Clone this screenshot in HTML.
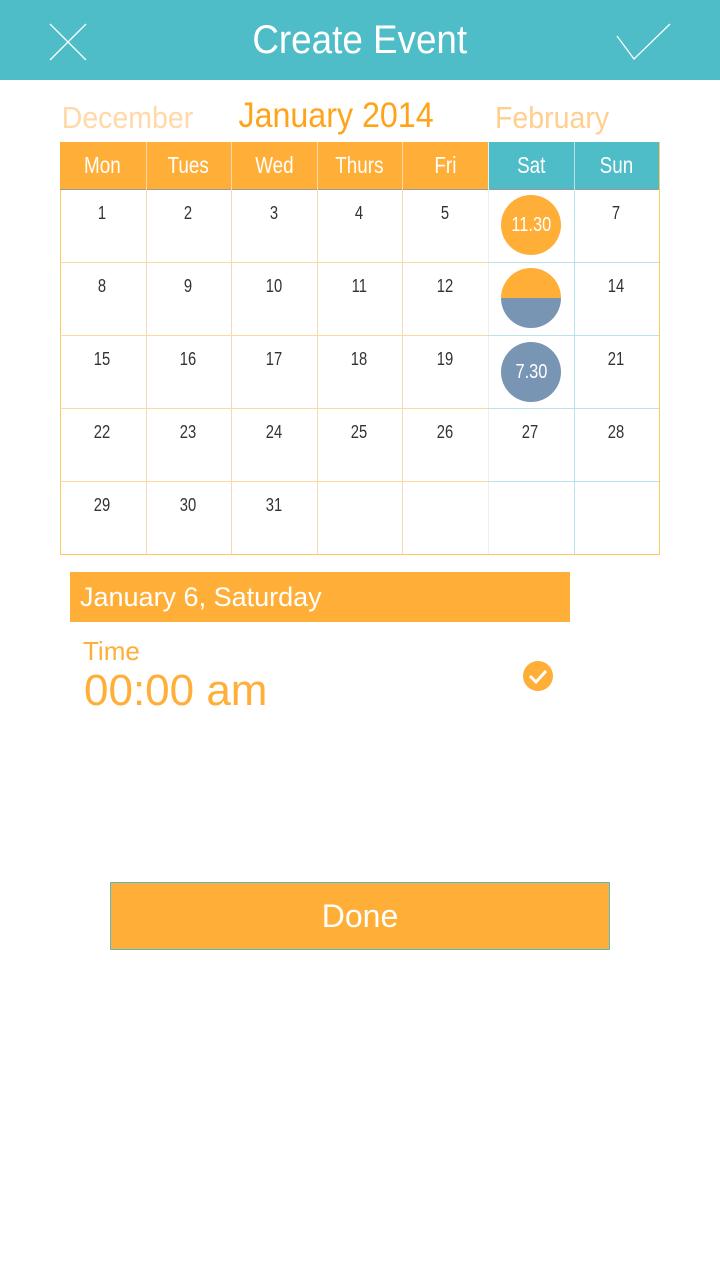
<!DOCTYPE html>
<html><head><meta charset="utf-8"><style>
*{margin:0;padding:0;box-sizing:border-box}
body{width:720px;height:1280px;background:#fff;position:relative;overflow:hidden;font-family:"Liberation Sans",sans-serif}
.a{position:absolute}
.top{left:0;top:0;width:720px;height:80px;background:#4ebdc8}
.sq{display:inline-block;transform:scaleX(0.82);transform-origin:center}
.sq2{display:inline-block;transform:scaleX(0.92);transform-origin:center}
.title{left:0;width:720px;top:18px;text-align:center;color:#fff;font-size:40px}
.m{top:96px;font-size:35px;color:#ffa31a;width:260px;text-align:center}
.hd{top:142px;height:47px;color:#fff;font-size:23px;text-align:center;line-height:46px}
.n{font-size:18px;color:#333;text-align:center;width:85px}
.c{width:60px;height:60px;border-radius:50%;color:#fff;font-size:20px;text-align:center;line-height:60px}
</style></head><body>
<div class="a top"></div>
<svg class="a" style="left:48px;top:22px" width="40" height="40"><path d="M2 2L38 38M38 2L2 38" stroke="#fff" stroke-width="1.3"/></svg>
<svg class="a" style="left:615px;top:22px" width="58" height="40"><path d="M2 14L19 37L55 2" stroke="#fff" stroke-width="1.3" fill="none"/></svg>
<div class="a title"><span class="sq2">Create Event</span></div>
<div class="a m" style="left:-3px;color:#ffd9a8;font-size:31px;top:100px"><span class="sq2">December</span></div>
<div class="a m" style="left:206px"><span class="sq2">January 2014</span></div>
<div class="a m" style="left:422px;color:#ffcf8f;font-size:31px;top:100px"><span class="sq2">February</span></div>
<div class="a" style="left:60px;top:142px;width:600px;height:413px;border:1px solid #ffc860"></div>
<div class="a hd" style="left:60px;width:428px;background:#ffae38"></div>
<div class="a hd" style="left:488px;width:171px;background:#4ebdc8"></div>
<div class="a" style="left:60px;top:189px;width:599px;height:1px;background:#999"></div>
<div id="g"></div>
<div class="a c" style="left:501px;top:195px;background:#ffae38"><span class="sq">11.30</span></div>
<div class="a" style="left:501px;top:268px;width:60px;height:60px;border-radius:50%;background:linear-gradient(#ffae38 50%,#7895b3 50%)"></div>
<div class="a c" style="left:501px;top:342px;background:#7895b3"><span class="sq">7.30</span></div>
<div class="a" style="left:70px;top:572px;width:500px;height:50px;background:#ffae38;color:#fff;font-size:27px;line-height:50px;padding-left:10px">January 6, Saturday</div>
<div class="a" style="left:83px;top:636px;color:#ffae38;font-size:26px">Time</div>
<div class="a" style="left:84px;top:666px;color:#ffae38;font-size:44px">00:00 am</div>
<svg class="a" style="left:522px;top:660px" width="32" height="32"><circle cx="16" cy="16" r="15" fill="#ffae38"/><path d="M8 16L14 22L24 11" stroke="#fff" stroke-width="3" fill="none"/></svg>
<div class="a" style="left:110px;top:882px;width:500px;height:68px;background:#ffae38;border:1px solid #4ebdc8;color:#fff;font-size:32px;text-align:center;line-height:66px">Done</div>
<script>
var g=document.getElementById('g'),h='';
var names=['Mon','Tues','Wed','Thurs','Fri','Sat','Sun'];
var cw=85.6;
for(var i=0;i<7;i++){h+='<div class="a hd" style="left:'+(60+i*cw)+'px;width:'+cw+'px"><span class="sq">'+names[i]+'</span></div>';}
for(var i=1;i<7;i++){var col=i<5?'#f5d9b0':(i==5?'#eee':'#b8e3e8');h+='<div class="a" style="left:'+(60+i*cw)+'px;top:142px;width:1px;height:412px;background:'+col+'"></div>';}
for(var r=1;r<5;r++){var y=189+r*73;h+='<div class="a" style="left:60px;top:'+y+'px;width:428px;height:1px;background:#ffd9a0"></div><div class="a" style="left:488px;top:'+y+'px;width:171px;height:1px;background:#b8e3e8"></div>';}
for(var d=1;d<=31;d++){var k=d-1,c=k%7,r=Math.floor(k/7);if(c==5&&r<3)continue;h+='<div class="a n" style="left:'+(60+c*cw)+'px;top:'+(203+r*73)+'px"><span class="sq">'+d+'</span></div>';}
g.innerHTML=h;
</script>
</body></html>
